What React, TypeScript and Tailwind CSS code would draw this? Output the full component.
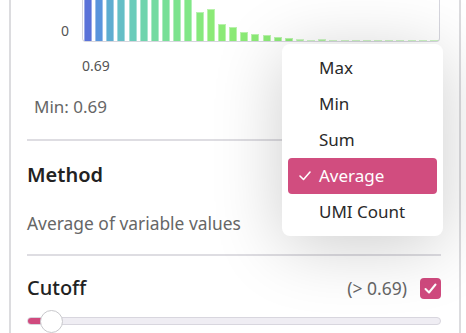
import React from "react";

const barHeights = [
  60, 60, 60, 60, 60, 60, 60, 60, 60, 60, 29, 32, 17, 14, 9, 7, 6, 4, 3, 2, 1, 2, 1, 1, 0, 1, 1, 1, 1, 0, 0, 1,
];

const barColors = [
  "#5a72d8", "#5a95dc", "#5eadd0", "#64bfc6", "#6accba", "#6fd4ad", "#74daa1", "#77df97",
  "#7ce38e", "#80e787", "#86e97c", "#8bea76",
];

const methods = ["Max", "Min", "Sum", "Average", "UMI Count"];

function Histogram() {
  return (
    <div className="flex items-end">
      <div className="w-[42px] pb-[2px] text-right text-[14px] text-[#555] leading-[18px]">0</div>
      <div className="ml-[13px] -mt-[20px] flex h-[62px] w-[358px] items-end justify-between rounded-b-[4px] border-x border-b border-[#d6d6de] px-px">
        {barHeights.map((h, i) => (
          <div
            key={i}
            className="w-[8px] border border-b-0 border-white/40"
            style={{
              height: h,
              backgroundColor: barColors[Math.min(i, barColors.length - 1)],
              opacity: i > 18 ? 0.7 : 1,
            }}
          />
        ))}
      </div>
    </div>
  );
}

function MethodMenu() {
  return (
    <div className="absolute left-[282px] top-[44px] w-[161px] rounded-[8px] bg-white py-[6px] shadow-[0_10px_70px_rgba(0,0,0,0.2)]">
      {methods.map((m) => {
        const active = m === "Average";
        return (
          <div
            key={m}
            className={
              active
                ? "mx-[6px] flex h-[36px] items-center rounded-[4px] bg-[#d14d7f] text-white"
                : "mx-[6px] flex h-[36px] items-center text-[#2a2a2a]"
            }
          >
            <span className="flex w-[31px] justify-center pl-[2px]">
              {active ? (
                <svg width="12" height="10" viewBox="0 0 12 10" fill="none">
                  <polyline points="1,5 4.5,8.5 11,1" stroke="white" strokeWidth="1.6" strokeLinecap="round" strokeLinejoin="round" />
                </svg>
              ) : null}
            </span>
            <span className="text-[17px]">{m}</span>
          </div>
        );
      })}
    </div>
  );
}

export default function App() {
  return (
    <div
      className="relative h-[333px] w-[466px] overflow-hidden bg-white"
      style={{ fontFamily: '"Noto Sans", "Open Sans", sans-serif' }}
    >
      <div className="ml-[9px] h-full w-[452px] border-x-2 border-[#dcdcdf] bg-white pl-[16px] pr-[18px]">
        <Histogram />
        <div className="ml-[55px] mt-[15px] text-[14px] leading-[18px] text-[#555]">0.69</div>
        <div className="mt-[22px] ml-[7px] text-[17px] leading-[20px] text-[#666]">Min: 0.69</div>
        <div className="mt-[22px] h-[2px] bg-[#dedde2]" />
        <div className="mt-[22px] text-[20px] font-semibold leading-[24px] text-[#222]">Method</div>
        <div className="mt-[26px] text-[17.4px] leading-[20px] text-[#666]">Average of variable values</div>
        <div className="mt-[21px] h-[2px] bg-[#dedde2]" />
        <div className="mt-[20px] flex h-[24px] items-center">
          <span className="flex-1 text-[20px] font-medium text-[#222]">Cutoff</span>
          <span className="text-[17.5px] text-[#666]">(&gt; 0.69)</span>
          <span className="ml-[13px] flex h-[21px] w-[21px] items-center justify-center rounded-[4px] bg-[#d04a7e]">
            <svg width="13" height="11" viewBox="0 0 13 11" fill="none">
              <polyline points="1.5,6 5,9.5 11.5,1.5" stroke="white" strokeWidth="2" strokeLinecap="round" strokeLinejoin="round" />
            </svg>
          </span>
        </div>
        <div className="relative mt-[17px] h-[8px] rounded-full border border-[#d8d6de] bg-[#efedf3]">
          <div className="h-full w-[20px] rounded-l-full bg-[#d04a7e]" />
          <div className="absolute left-[12px] top-[-8px] h-[23px] w-[23px] rounded-full border border-[#c8c8cc] bg-white" />
        </div>
      </div>
      <MethodMenu />
    </div>
  );
}
